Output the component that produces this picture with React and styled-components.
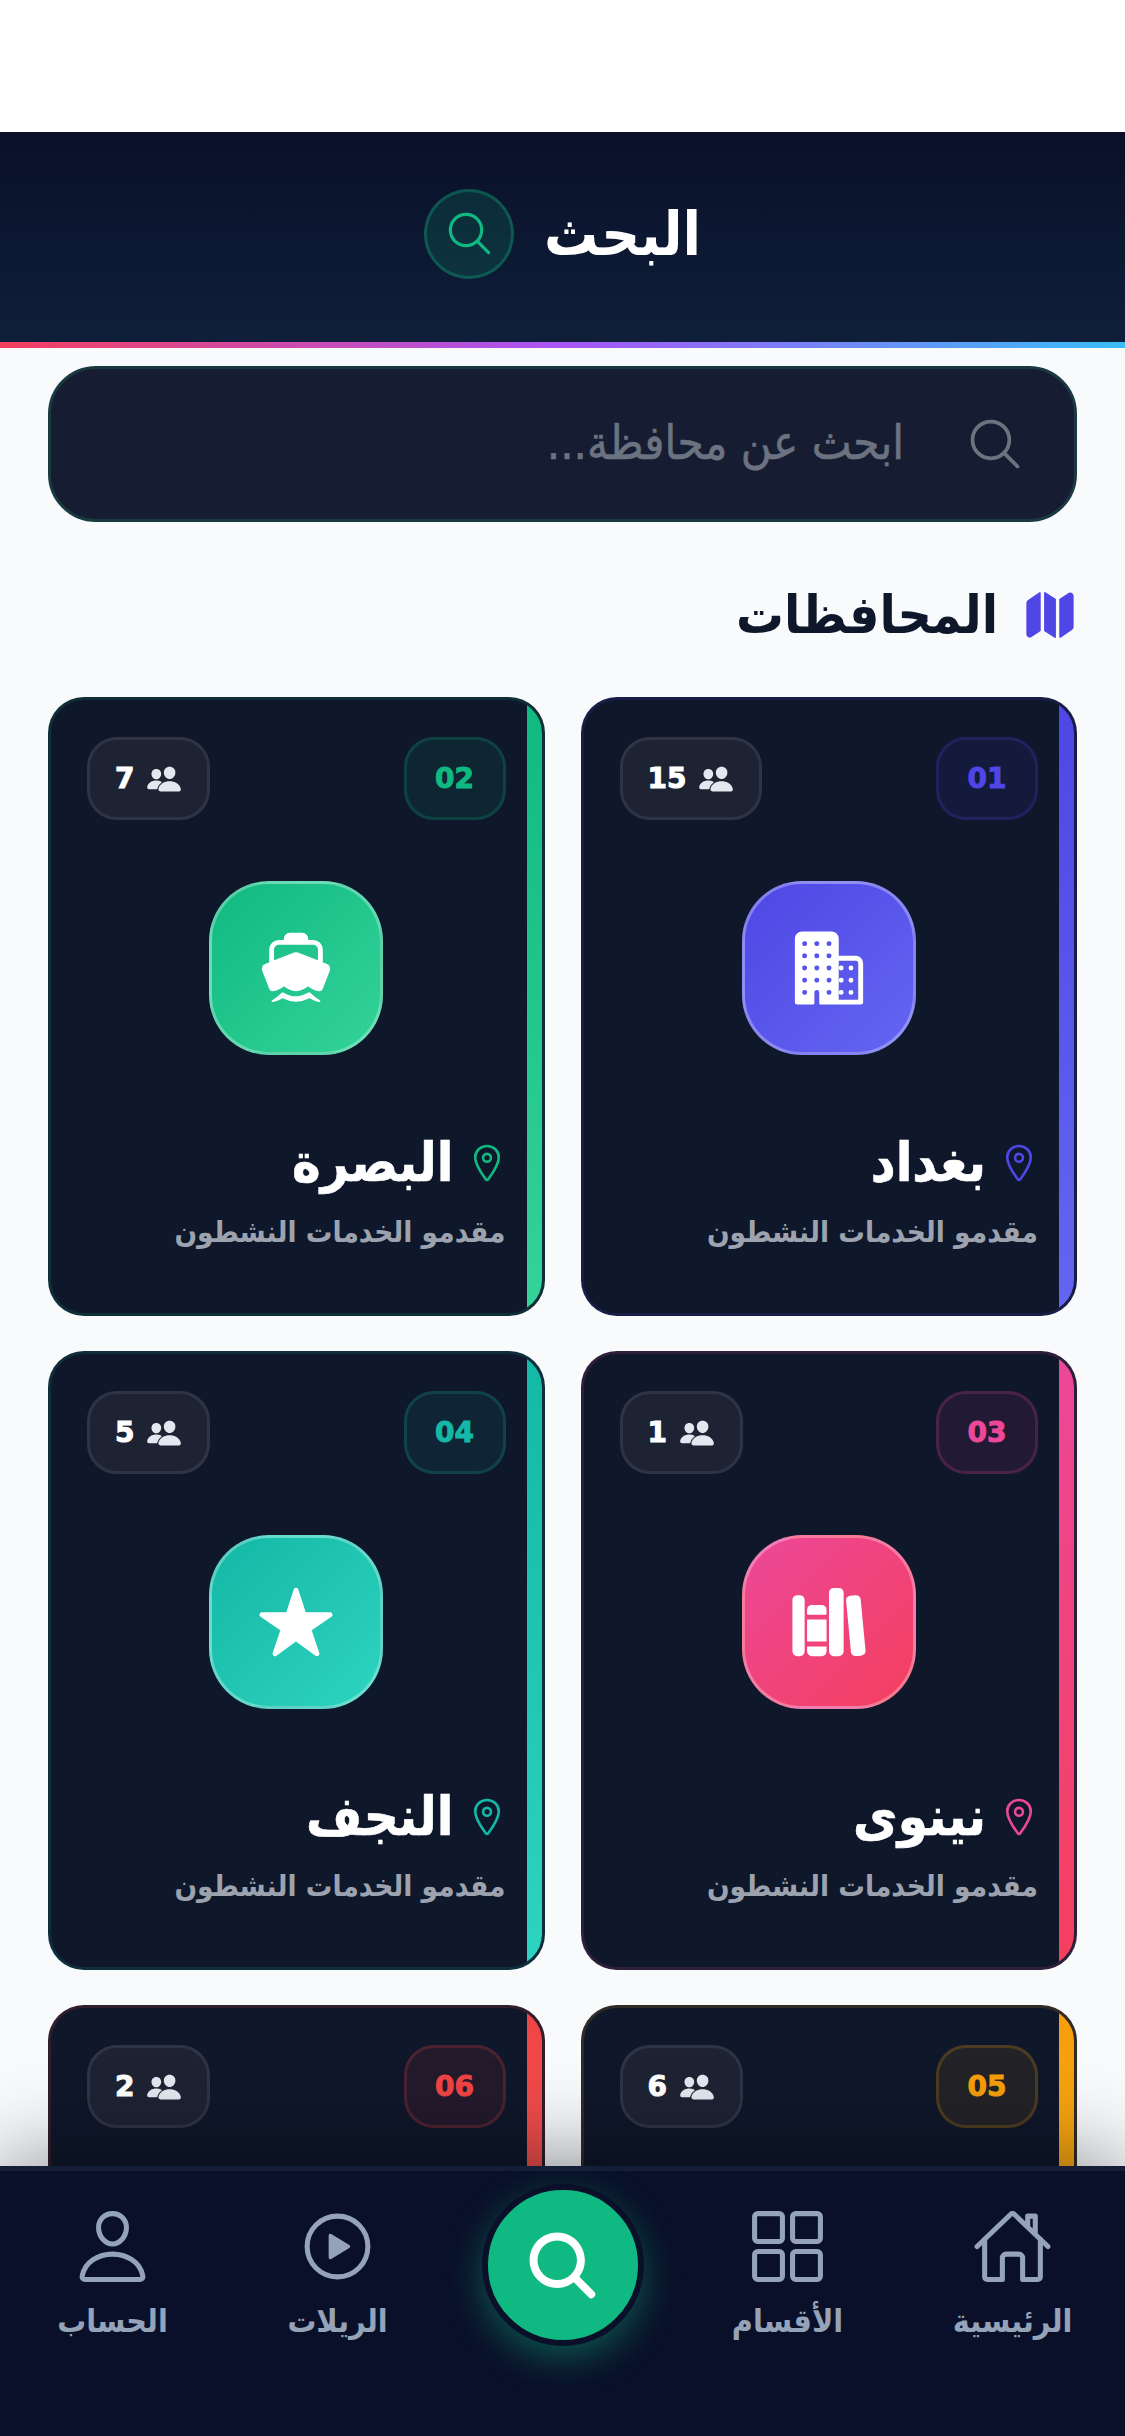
import React from 'react';
import styled, { createGlobalStyle } from 'styled-components';
import {
	IoSearchOutline,
	IoSearch,
	IoMap,
	IoPeople,
	IoBusiness,
	IoBoat,
	IoLibrary,
	IoStar,
	IoLocationOutline,
	IoHomeOutline,
	IoGridOutline,
	IoPlayCircleOutline,
	IoPersonOutline,
} from 'react-icons/io5';

const fontStack = `'DejaVu Sans Condensed', 'DejaVu Sans', sans-serif`;

const GlobalStyle = createGlobalStyle`
	* { box-sizing: border-box; }
	html, body { margin: 0; padding: 0; background: #fff; }
	body { font-family: ${fontStack}; font-stretch: condensed; }
`;

const Screen = styled.div`
	width: 1125px;
	height: 2436px;
	display: flex;
	flex-direction: column;
	overflow: hidden;
	background: #fff;
	padding-top: 132px;
`;

const Header = styled.header`
	flex: none;
	height: 216px;
	display: flex;
	flex-direction: column;
	background: linear-gradient(180deg, #0a1029 0%, #0f1f3a 100%);
`;

const HeaderRow = styled.div`
	flex: 1;
	display: flex;
	align-items: center;
	justify-content: center;
	gap: 30px;
	padding-bottom: 7px;
`;

const HeaderTitle = styled.h1`
	margin: 0;
	font-size: 60px;
	line-height: 80px;
	font-weight: 700;
	color: #fff;
`;

const HeaderIcon = styled.div`
	width: 90px;
	height: 90px;
	border-radius: 50%;
	display: flex;
	align-items: center;
	justify-content: center;
	color: #10b981;
	background: rgba(16, 185, 129, 0.15);
	border: 3px solid rgba(16, 185, 129, 0.3);
`;

const RainbowLine = styled.div`
	flex: none;
	height: 6px;
	background: linear-gradient(90deg, #f43f5e 0%, #a855f7 50%, #38bdf8 100%);
`;

const Content = styled.main`
	flex: 1;
	min-height: 0;
	overflow: hidden;
	background: #f8fafc;
	padding: 18px 48px 0;
`;

const SearchBar = styled.div`
	height: 156px;
	display: flex;
	align-items: center;
	gap: 61px;
	padding: 0 49px;
	border-radius: 48px;
	background: #161c32;
	border: 3px solid #1a3a42;
	color: #6b7280;
`;

const SearchText = styled.span`
	font-size: 47px;
	line-height: 60px;
	font-weight: 400;
	margin-top: -2px;
	-webkit-text-stroke: 0.6px currentColor;
	color: #6b7280;
`;

const SectionHead = styled.div`
	display: flex;
	align-items: center;
	gap: 25px;
	margin: 57px 0 46px;
	height: 72px;
	color: #4f46e5;
`;

const SectionTitle = styled.h2`
	margin: 0;
	font-size: 53px;
	line-height: 72px;
	font-weight: 700;
	color: #0f172a;
`;

const CardGrid = styled.div`
	display: grid;
	grid-template-columns: repeat(2, 1fr);
	gap: 35px 36px;
`;

const Card = styled.article`
	position: relative;
	height: 619px;
	border-radius: 36px;
	padding: 37px 36px;
	background: #0f172a;
	border: 3px solid ${(p) => p.$from}26;
	overflow: hidden;
	display: flex;
	flex-direction: column;
`;

const Stripe = styled.div`
	position: absolute;
	top: 0;
	right: 0;
	bottom: 0;
	width: 15px;
	background: linear-gradient(180deg, ${(p) => p.$from}, ${(p) => p.$to});
`;

const CardTop = styled.div`
	display: flex;
	align-items: center;
	justify-content: space-between;
`;

const NumberBadge = styled.div`
	width: 102px;
	height: 83px;
	border-radius: 30px;
	display: flex;
	align-items: center;
	justify-content: center;
	font-family: 'DejaVu Sans', sans-serif;
	font-stretch: normal;
	font-size: 28px;
	font-weight: 700;
	-webkit-text-stroke: 1px currentColor;
	color: ${(p) => p.$from};
	background: ${(p) => p.$from}17;
	border: 3px solid ${(p) => p.$from}33;
`;

const UsersBadge = styled.div`
	height: 83px;
	padding: 0 25px;
	border-radius: 30px;
	display: flex;
	align-items: center;
	gap: 12px;
	background: #1e2334;
	border: 3px solid #2e3444;
	color: #e2e8f0;
`;

const UsersCount = styled.span`
	font-family: 'DejaVu Sans', sans-serif;
	font-stretch: normal;
	font-size: 28px;
	font-weight: 700;
	-webkit-text-stroke: 1px currentColor;
	color: #fff;
`;

const IconTile = styled.div`
	align-self: center;
	width: 174px;
	height: 174px;
	margin-top: 61px;
	border-radius: 60px;
	display: flex;
	align-items: center;
	justify-content: center;
	color: #fff;
	background: linear-gradient(135deg, ${(p) => p.$from}, ${(p) => p.$to});
	border: 3px solid rgba(255, 255, 255, 0.3);
`;

const NameRow = styled.div`
	display: flex;
	align-items: center;
	gap: 12px;
	margin-top: 72px;
	margin-right: -2px;
	height: 72px;
	color: ${(p) => p.$from};
`;

const CityName = styled.h3`
	margin: 0;
	font-size: 54px;
	line-height: 72px;
	font-weight: 700;
	-webkit-text-stroke: 0.6px currentColor;
	color: #fff;
`;

const CardNote = styled.p`
	margin: 9px 0 0;
	font-size: 29.5px;
	line-height: 48px;
	font-weight: 700;
	color: #9ca3af;
`;

const BottomNav = styled.nav`
	position: relative;
	flex: none;
	height: 270px;
	display: grid;
	grid-template-columns: repeat(5, 1fr);
	align-items: start;
	background: #0a1029;
	border-top: 5px solid #151e38;
	box-shadow: 0 -6px 90px rgba(0, 0, 0, 0.45);
`;

const NavItem = styled.div`
	display: flex;
	flex-direction: column;
	align-items: center;
	gap: 10px;
	padding-top: 35px;
	color: #94a3b8;
`;

const NavLabel = styled.span`
	font-size: 32px;
	line-height: 48px;
	font-weight: 700;
	color: #94a3b8;
`;

const FabCell = styled.div`
	display: flex;
	justify-content: center;
	padding-top: 13px;
`;

const Fab = styled.div`
	width: 162px;
	height: 162px;
	border-radius: 50%;
	display: flex;
	align-items: center;
	justify-content: center;
	color: #fff;
	background: #10b981;
	border: 6px solid #0a1029;
	box-shadow: 0 12px 36px rgba(16, 185, 129, 0.4);
`;

// the last two cards run under the bottom bar, only their top part shows
const cities = [
	{ no: '01', name: 'بغداد', count: 15, Icon: IoBusiness, from: '#4f46e5', to: '#6366f1' },
	{ no: '02', name: 'البصرة', count: 7, Icon: IoBoat, from: '#10b981', to: '#34d399' },
	{ no: '03', name: 'نينوى', count: 1, Icon: IoLibrary, from: '#ec4899', to: '#f43f5e' },
	{ no: '04', name: 'النجف', count: 5, Icon: IoStar, from: '#14b8a6', to: '#2dd4bf' },
	{ no: '05', count: 6, from: '#f59e0b', to: '#fbbf24' },
	{ no: '06', count: 2, from: '#ef4444', to: '#f87171' },
];

const navItems = [
	{ label: 'الرئيسية', Icon: IoHomeOutline },
	{ label: 'الأقسام', Icon: IoGridOutline },
	null,
	{ label: 'الريلات', Icon: IoPlayCircleOutline },
	{ label: 'الحساب', Icon: IoPersonOutline },
];

export default function App() {
	return (
		<Screen dir="rtl">
			<GlobalStyle />
			<Header>
				<HeaderRow>
					<HeaderTitle>البحث</HeaderTitle>
					<HeaderIcon>
						<IoSearchOutline size={51} />
					</HeaderIcon>
				</HeaderRow>
				<RainbowLine />
			</Header>
			<Content>
				<SearchBar>
					<IoSearchOutline size={60} />
					<SearchText>ابحث عن محافظة...</SearchText>
				</SearchBar>
				<SectionHead>
					<IoMap size={54} />
					<SectionTitle>المحافظات</SectionTitle>
				</SectionHead>
				<CardGrid>
					{cities.map(({ no, name, count, Icon, from, to }) => (
						<Card key={no} $from={from}>
							<Stripe $from={from} $to={to} />
							<CardTop>
								<NumberBadge $from={from}>{no}</NumberBadge>
								<UsersBadge>
									<IoPeople size={36} />
									<UsersCount>{count}</UsersCount>
								</UsersBadge>
							</CardTop>
							{name && (
								<>
									<IconTile $from={from} $to={to}>
										<Icon size={78} />
									</IconTile>
									<NameRow $from={from}>
										<IoLocationOutline size={42} />
										<CityName>{name}</CityName>
									</NameRow>
									<CardNote>مقدمو الخدمات النشطون</CardNote>
								</>
							)}
						</Card>
					))}
				</CardGrid>
			</Content>
			<BottomNav>
				{navItems.map((item, i) =>
					item ? (
						<NavItem key={item.label}>
							<item.Icon size={81} />
							<NavLabel>{item.label}</NavLabel>
						</NavItem>
					) : (
						<FabCell key={i}>
							<Fab>
								<IoSearch size={81} />
							</Fab>
						</FabCell>
					)
				)}
			</BottomNav>
		</Screen>
	);
}
